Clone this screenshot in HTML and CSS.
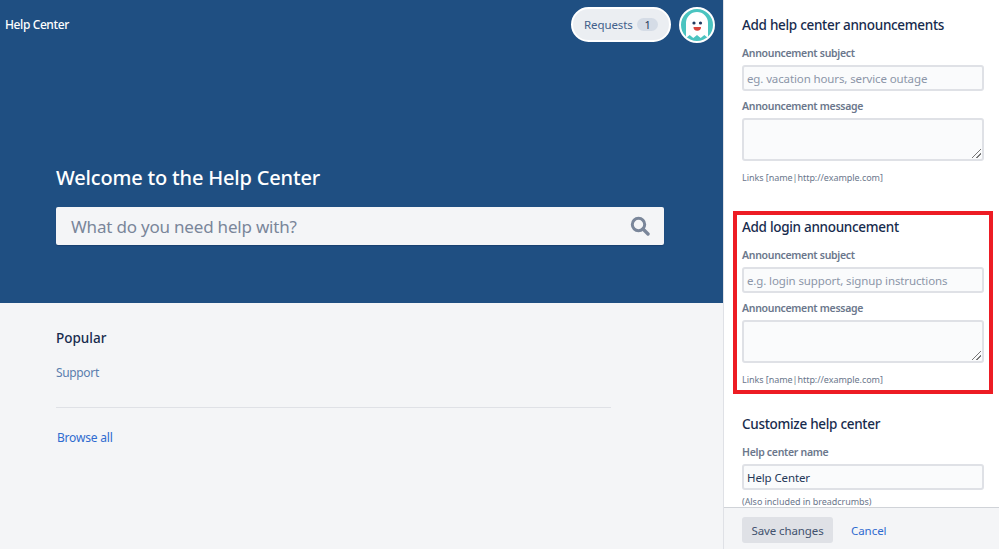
FILE: index.html
```html
<!DOCTYPE html>
<html>
<head>
	<meta charset="UTF-8">
	<title>Help Center</title>
	<link rel="stylesheet" href="styles.css">
</head>
<body>
	<div class="page">
		<main class="portal">
			<header class="hero">
				<div class="topbar">
					<a class="brand">Help Center</a>
					<div class="user">
						<a class="requests">Requests <span class="count">1</span></a>
						<span class="avatar">
							<svg width="36" height="36" viewBox="0 0 36 36">
								<defs><clipPath id="disc"><circle cx="18" cy="18" r="16"/></clipPath></defs>
								<circle cx="18" cy="18" r="17" fill="#4bc4c0" stroke="#fff" stroke-width="2"/>
								<path clip-path="url(#disc)" d="M7 31V16a11 11 0 0 1 22 0v15l-3.700-3-3.600 3-3.700-3-3.700 3-3.600-3z" fill="#fff"/>
								<circle cx="15" cy="16" r="1.600" fill="#1f3a5f"/>
								<circle cx="21.500" cy="16" r="1.600" fill="#1f3a5f"/>
								<path d="M14.500 20h7.500a3.750 3.750 0 0 1-7.500 0z" fill="#d8443c"/>
							</svg>
						</span>
					</div>
				</div>
				<div class="search-wrap">
					<h1>Welcome to the Help Center</h1>
					<div class="search">
						<span>What do you need help with?</span>
						<svg width="20" height="20" viewBox="0 0 20 20">
							<circle cx="8.500" cy="8.500" r="6.200" fill="none" stroke="#7a869a" stroke-width="3"/>
							<path d="M13 13l5 5" stroke="#7a869a" stroke-width="3.400" stroke-linecap="round"/>
						</svg>
					</div>
				</div>
			</header>
			<section class="popular">
				<h2>Popular</h2>
				<a class="topic">Support</a>
				<hr>
				<a class="browse">Browse all</a>
			</section>
		</main>
		<aside class="settings">
			<div class="settings-body">
				<section class="group">
					<h3>Add help center announcements</h3>
					<label>Announcement subject</label>
					<div class="field">eg. vacation hours, service outage</div>
					<label>Announcement message</label>
					<div class="field area"><i class="grip"></i></div>
					<small>Links [name|http://example.com]</small>
				</section>
				<section class="group marked">
					<h3>Add login announcement</h3>
					<label>Announcement subject</label>
					<div class="field">e.g. login support, signup instructions</div>
					<label>Announcement message</label>
					<div class="field area"><i class="grip"></i></div>
					<small>Links [name|http://example.com]</small>
				</section>
				<section class="group">
					<h3>Customize help center</h3>
					<label>Help center name</label>
					<div class="field filled">Help Center</div>
					<small class="note">(Also included in breadcrumbs)</small>
				</section>
			</div>
			<footer class="settings-foot">
				<button>Save changes</button>
				<a>Cancel</a>
			</footer>
		</aside>
	</div>
</body>
</html>
```

FILE: styles.css
```css
*{margin: 0;padding: 0;box-sizing: border-box;}
html,body{height: 100%;overflow: hidden;}
body{font-family: "Noto Sans","Open Sans",sans-serif;color: #172b4d;font-size: 12px;}
.page{display: flex;height: 549px;}

.portal{width: 724px;flex: none;background: #f4f5f7;border-right: 1px solid #dfe1e6;}
.hero{height: 303px;background: #1f4f82;}
.topbar{display: flex;justify-content: space-between;align-items: center;height: 49px;padding: 0 8px 0 5px;}
.brand{color: #fff;font-size: 12px;font-weight: 500;letter-spacing: -.4px;}
.user{display: flex;align-items: center;gap: 8px;}
.requests{display: flex;align-items: center;justify-content: space-between;width: 100px;height: 35px;padding: 0 11px 0 11px;background: #ebeef2;border: 2px solid #fff;border-radius: 18px;color: #42608a;font-size: 11.5px;letter-spacing: -.1px;}
.count{width: 21px;height: 13px;line-height: 13px;text-align: center;background: #d5dce6;border-radius: 7px;color: #253858;font-size: 11px;}
.avatar{display: block;width: 36px;height: 36px;}
.search-wrap{padding: 114px 59px 0 56px;}
h1{color: #fff;font-size: 20px;font-weight: 500;line-height: 30px;letter-spacing: -.18px;}
.search{display: flex;justify-content: space-between;align-items: center;height: 38px;margin-top: 14px;padding: 0 14px 0 15px;background: #f4f5f7;border-radius: 2px;box-shadow: 0 1px 1px rgba(9,30,66,.3);color: #7a869a;font-size: 17px;letter-spacing: -.2px;}
.popular{padding: 25px 112px 0 56px;}
h2{font-size: 13.5px;font-weight: 500;line-height: 20px;}
.topic{display: block;margin-top: 16px;color: #5a7eae;font-size: 12px;line-height: 18px;letter-spacing: -.35px;}
hr{margin-top: 25px;border: none;border-top: 1px solid #dfe1e6;}
.browse{display: block;margin: 21px 0 0 1px;color: #2f6bd0;font-size: 12px;line-height: 18px;letter-spacing: -.2px;}

.settings{flex: 1;display: flex;flex-direction: column;background: #fff;min-width: 0;}
.settings-body{flex: 1;overflow: hidden;padding: 15px 15px 0 18px;}
.group{margin-bottom: 32px;}
h3{font-size: 13.5px;font-weight: 500;line-height: 20px;letter-spacing: -.3px;}
label{display: block;margin-top: 7px;color: #6b778c;font-size: 10.5px;font-weight: 600;line-height: 16px;letter-spacing: -.3px;}
.group h3 + label{margin-top: 10px;}
.field{position: relative;height: 26px;margin-top: 4px;padding: 0 3px;background: #fafbfc;border: 2px solid #dfe1e6;border-radius: 3px;color: #8c96a8;font-size: 11.5px;line-height: 23px;letter-spacing: -.12px;}
.area{height: 43px;}
.filled{color: #253858;}
.grip{position: absolute;right: 1px;bottom: 1px;width: 9px;height: 9px;background: linear-gradient(135deg,transparent 45%,#777 45%,#777 55%,transparent 55%,transparent 70%,#777 70%,#777 78%,transparent 78%);}
small{display: block;margin-top: 9px;color: #6b778c;font-size: 9px;line-height: 16px;letter-spacing: -.05px;}
.note{margin-top: 4px;}
.marked{margin: -7px -9px 20px -9px;padding: 2px 5px 2px 5px;border: 4px solid #ed1c24;}
.settings-foot{display: flex;align-items: center;gap: 18px;height: 42px;padding: 3px 18px 0;background: #f4f5f7;border-top: 1px solid #d0d3d8;}
button{width: 91px;height: 26px;background: #dfe1e6;border: none;border-radius: 3px;color: #42526e;font: 11.5px "Noto Sans","Open Sans",sans-serif;letter-spacing: -.1px;}
.settings-foot a{color: #2f6bd0;font-size: 11.5px;letter-spacing: -.05px;}
```
